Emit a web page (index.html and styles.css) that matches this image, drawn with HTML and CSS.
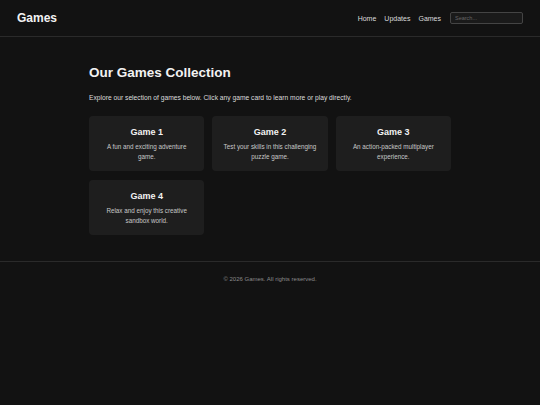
FILE: index.html
```html
<!DOCTYPE html>
<html>
<head>
<meta charset="utf-8">
<link rel="stylesheet" href="styles.css">
</head>
<body>
<header class="site-header">
  <div class="brand">Games</div>
  <nav class="nav">
    <a href="#">Home</a>
    <a href="#">Updates</a>
    <a href="#">Games</a>
    <input class="search" type="text" placeholder="Search...">
  </nav>
</header>
<main class="main">
  <h1 class="title">Our Games Collection</h1>
  <p class="intro">Explore our selection of games below. Click any game card to learn more or play directly.</p>
  <div class="grid">
    <div class="card"><h2>Game 1</h2><p>A fun and exciting adventure game.</p></div>
    <div class="card"><h2>Game 2</h2><p>Test your skills in this challenging puzzle game.</p></div>
    <div class="card"><h2>Game 3</h2><p>An action-packed multiplayer experience.</p></div>
    <div class="card"><h2>Game 4</h2><p>Relax and enjoy this creative sandbox world.</p></div>
  </div>
</main>
<footer class="footer">© 2026 Games. All rights reserved.</footer>
</body>
</html>
```
FILE: styles.css
```css
* { box-sizing: border-box; }
html, body { margin: 0; padding: 0; }
body {
  background: #121212;
  color: #e8e8e8;
  font-family: "Liberation Sans", Arial, sans-serif;
  height: 405px;
  -webkit-font-smoothing: antialiased;
}
.site-header {
  height: 37px;
  border-bottom: 1px solid #2a2a2a;
  display: flex;
  align-items: center;
  justify-content: space-between;
  padding: 0 17px;
}
.brand {
  font-size: 12px;
  font-weight: bold;
  color: #f2f2f2;
}
.nav {
  display: flex;
  align-items: center;
  gap: 8px;
}
.nav a {
  color: #dcdcdc;
  text-decoration: none;
  font-size: 7px;
}
.search {
  width: 73px;
  height: 12px;
  margin-left: 1px;
  background: #1a1a1a;
  border: 1px solid #444;
  border-radius: 2px;
  padding: 0 4px;
  font-size: 5.5px;
  color: #ccc;
  font-family: inherit;
}
.search::placeholder { color: #666; }
.main {
  width: 362px;
  margin: 0 auto;
  padding: 27px 0 26px;
}
.title {
  margin: 0;
  font-size: 13.5px;
  font-weight: bold;
  color: #f2f2f2;
  line-height: 18px;
}
.intro {
  margin: 11px 0 0;
  font-size: 6.7px;
  line-height: 10px;
  color: #dcdcdc;
}
.grid {
  margin-top: 13px;
  display: grid;
  grid-template-columns: repeat(3, 1fr);
  gap: 9px 8px;
}
.card {
  background: #1e1e1e;
  border-radius: 4px;
  height: 55px;
  padding: 10px 9px 0;
  text-align: center;
}
.card h2 {
  margin: 0;
  font-size: 9px;
  line-height: 12px;
  color: #f2f2f2;
}
.card p {
  margin: 4px 0 0;
  font-size: 6.3px;
  line-height: 10px;
  color: #c8c8c8;
}
.footer {
  border-top: 1px solid #2a2a2a;
  text-align: center;
  font-size: 6px;
  color: #8a8a8a;
  padding-top: 14px;
}
```
